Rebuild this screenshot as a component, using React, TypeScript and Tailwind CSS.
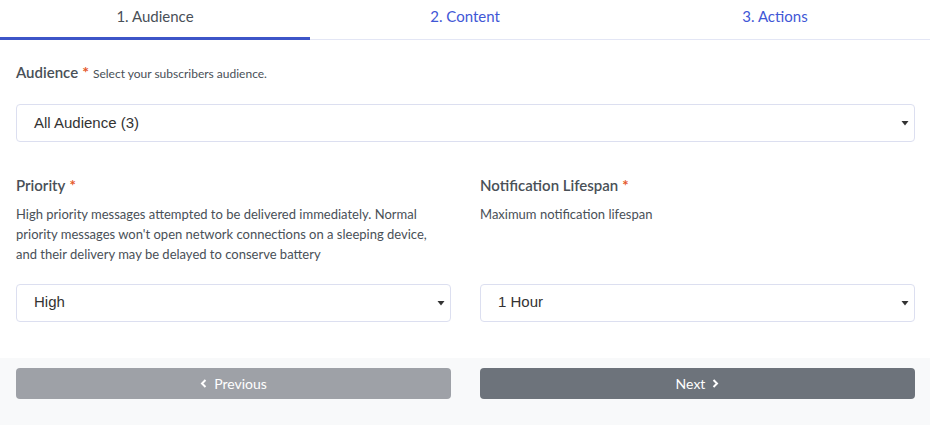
import React from "react";

const Caret = () => (
  <svg width="8" height="8" viewBox="0 0 8 8" className="absolute right-[5px] top-1/2 -translate-y-1/2">
    <path d="M0.5 2 L7.5 2 L4 6.5 Z" fill="#333" />
  </svg>
);

const FakeSelect = ({ value }: { value: string }) => (
  <div className="relative h-[38px] rounded border border-[#dcdff0] bg-white flex items-center pl-[17px] text-[15px] text-[#333] font-['Liberation_Sans',Arial,sans-serif]">
    {value}
    <Caret />
  </div>
);

const Star = () => <span className="text-[#e5592a] ml-[4px] font-bold">*</span>;

const App = () => {
  const tabs = ["1. Audience", "2. Content", "3. Actions"];
  return (
    <div className="w-[930px] h-[425px] bg-white font-['Lato','Noto_Sans',sans-serif] text-[#495057] overflow-hidden">
      <div className="flex border-b border-[#e3e6f5]">
        {tabs.map((t, i) => (
          <div
            key={t}
            className={
              i === 0
                ? "flex-1 h-[40px] flex items-center justify-center text-[15px] pb-[4px] text-[#495057] border-b-[3px] border-[#3d55c8] -mb-px"
                : "flex-1 h-[40px] flex items-center justify-center text-[15px] pb-[4px] text-[#3f57d6] border-b-[3px] border-transparent -mb-px"
            }
          >
            {t}
          </div>
        ))}
      </div>

      <div className="pl-4 pr-[15px]">
        <div className="pt-[20px] flex items-baseline">
          <span className="text-[15px] font-semibold">Audience</span>
          <Star />
          <span className="text-[12px] ml-[4px]">Select your subscribers audience.</span>
        </div>
        <div className="mt-[20px]">
          <FakeSelect value="All Audience (3)" />
        </div>

        <div className="grid grid-cols-2 gap-[29px] mt-[32px]">
          <div className="flex flex-col">
            <div className="text-[15px] font-semibold">
              Priority
              <Star />
            </div>
            <p className="text-[13px] leading-[20px] mt-[7px] h-[60px]">
              High priority messages attempted to be delivered immediately. Normal priority messages won't open
              network connections on a sleeping device, and their delivery may be delayed to conserve battery
            </p>
            <div className="mt-[20px]">
              <FakeSelect value="High" />
            </div>
          </div>
          <div className="flex flex-col">
            <div className="text-[15px] font-semibold">
              Notification Lifespan
              <Star />
            </div>
            <p className="text-[13px] leading-[20px] mt-[7px] h-[60px]">Maximum notification lifespan</p>
            <div className="mt-[20px]">
              <FakeSelect value="1 Hour" />
            </div>
          </div>
        </div>
      </div>

      <div className="mt-[36px] bg-[#f8f9fa] h-[80px] pl-4 pr-[15px] pt-[10px]">
        <div className="grid grid-cols-2 gap-[29px]">
          <button className="h-[31px] rounded bg-[#9ea1a7] text-white text-[14px] flex items-center justify-center gap-[7px]">
            <svg width="7" height="9" viewBox="0 0 7 9">
              <path d="M5.5 1 L2 4.5 L5.5 8" stroke="white" strokeWidth="2" fill="none" />
            </svg>
            Previous
          </button>
          <button className="h-[31px] rounded bg-[#6d737b] text-white text-[14px] flex items-center justify-center gap-[7px]">
            Next
            <svg width="7" height="9" viewBox="0 0 7 9">
              <path d="M1.5 1 L5 4.5 L1.5 8" stroke="white" strokeWidth="2" fill="none" />
            </svg>
          </button>
        </div>
      </div>
    </div>
  );
};

export default App;
